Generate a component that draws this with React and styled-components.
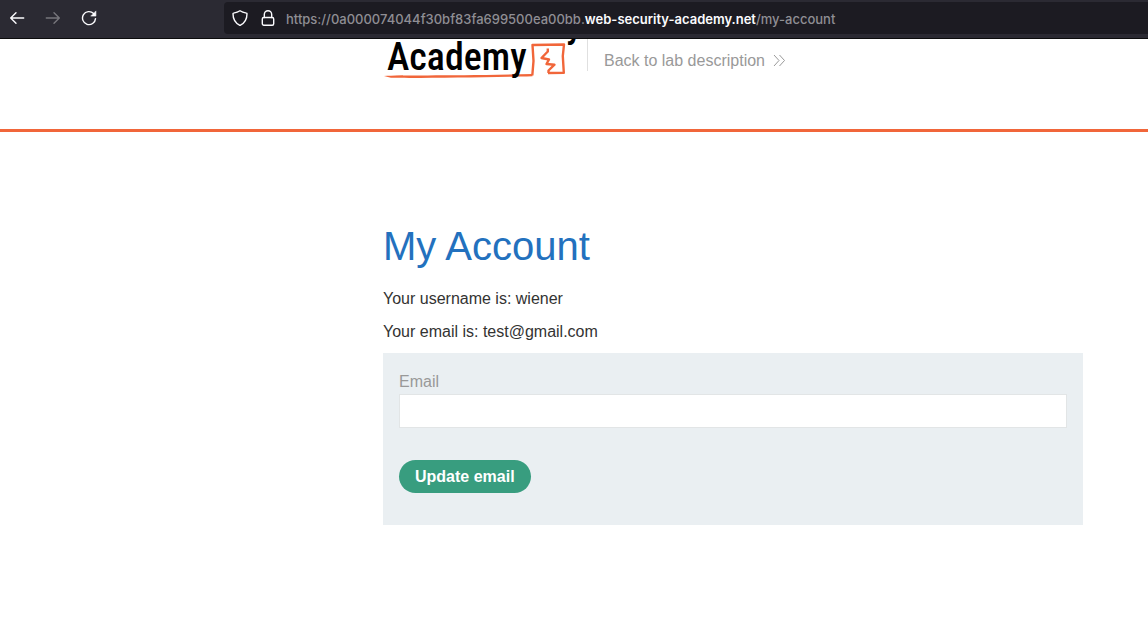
import React from "react";
import styled, { createGlobalStyle } from "styled-components";

const GlobalStyle = createGlobalStyle`
  * { box-sizing: border-box; }
  body {
    margin: 0;
    background: #fff;
    color: #333332;
    font-family: "Liberation Sans", Arial, sans-serif;
    font-size: 16px;
  }
`;

const Toolbar = styled.div`
  position: relative;
  z-index: 1;
  display: flex;
  height: 39px;
  background: #2b2a33;
  border-bottom: 1px solid #0c0c0d;
  padding-top: 2px;
`;

const NavButtons = styled.nav`
  display: flex;
  flex: 0 0 224px;
  height: 32px;
  padding-left: 1px;
  gap: 4px;
`;

const NavButton = styled.button`
  display: flex;
  align-items: center;
  justify-content: center;
  width: 32px;
  height: 32px;
  padding: 0;
  border: 0;
  background: none;
  color: ${(p) => (p.disabled ? "#77767c" : "#fbfbfe")};
`;

const AddressBar = styled.div`
  display: flex;
  flex: 1;
  align-items: center;
  height: 32px;
  padding-left: 8px;
  border-radius: 4px 0 0 4px;
  background: #1c1b22;
  color: #fbfbfe;
  gap: 12px;
`;

const Url = styled.span`
  padding-top: 2px;
  margin-left: -2px;
  color: #8f8e94;
  font-family: Inter, sans-serif;
  font-size: 13px;
  font-weight: 500;
  line-height: 20px;
  white-space: nowrap;
`;

const Domain = styled.span`
  color: #fbfbfe;
  font-weight: 600;
`;

const Header = styled.header`
  display: flex;
  height: 93px;
  padding-left: 383px;
  border-bottom: 3px solid #f1663a;
`;

const Logo = styled.svg`
  display: block;
  flex: none;
  overflow: visible;
`;

const LogoText = styled.text`
  font-family: "Roboto Condensed", Roboto, sans-serif;
  font-weight: 500;
  font-size: 38px;
`;

const LabLinkArea = styled.div`
  height: 32px;
  padding: 12px 0 0 16px;
  border-left: 1px solid #e0e0e0;
`;

const LabLink = styled.a`
  display: flex;
  align-items: center;
  gap: 8px;
  color: #999;
  line-height: 20px;
  text-decoration: none;
`;

const Main = styled.main`
  padding: 90px 65px 0 383px;
`;

const Title = styled.h1`
  margin: 0;
  color: #2371be;
  font-size: 40px;
  font-weight: 400;
  line-height: 48px;
`;

const Info = styled.p`
  margin: 0 0 13px;
  line-height: 20px;
`;

const Details = styled.section`
  padding: 19px 0 11px;

  ${Info}:last-child {
    margin-bottom: 0;
  }
`;

const Form = styled.form`
  display: flex;
  flex-direction: column;
  align-items: flex-start;
  padding: 19px 16px 32px;
  background: #eaeff2;
`;

const Label = styled.label`
  color: #999;
  line-height: 20px;
`;

const Field = styled.input`
  width: 100%;
  height: 34px;
  margin: 2px 0 32px;
  padding: 0 8px;
  border: 1px solid #e2e5e6;
  background: #fff;
  font: inherit;
`;

const Submit = styled.button`
  height: 33px;
  padding: 0 16px;
  border: 0;
  border-radius: 17px;
  background: #389d7f;
  color: #fff;
  font-family: inherit;
  font-size: 16px;
  font-weight: 700;
`;

function Icon({ children, size = 16, width = 1.4 }) {
  return (
    <svg width={size} height={size} viewBox="0 0 16 16" fill="none" stroke="currentColor"
      strokeWidth={width} strokeLinecap="round" strokeLinejoin="round" aria-hidden="true">
      {children}
    </svg>
  );
}

export default function App() {
  return (
    <>
      <GlobalStyle />
      <Toolbar>
        <NavButtons aria-label="Browser">
          <NavButton aria-label="Back">
            <Icon><path d="M14.7 8H2M7 2.7 1.7 8 7 13.3" /></Icon>
          </NavButton>
          <NavButton aria-label="Forward" disabled>
            <Icon><path d="M1.3 8H14M9 2.7 14.3 8 9 13.3" /></Icon>
          </NavButton>
          <NavButton aria-label="Reload">
            <Icon>
              <path d="M12.6 3.5A6.5 6.5 0 1 0 14.5 8.6" />
              <path d="M14.9 1.3v4.8h-4.8z" fill="currentColor" strokeWidth="0.6" />
            </Icon>
          </NavButton>
        </NavButtons>
        <AddressBar>
          <Icon><path d="M8 .8C6.3 2 4 2.7 1.5 3.1c-.3 0-.5.3-.5.7 0 5.2 2.4 9.2 6.5 11.4.3.2.7.2 1 0C12.6 13 15 9 15 3.8c0-.4-.2-.7-.5-.7C12 2.7 9.7 2 8 .8z" /></Icon>
          <Icon><rect x="2.3" y="7.5" width="11.4" height="7.8" rx="1.5" /><path d="M4.3 7.5V4.4a3.7 3.7 0 0 1 7.4 0v3.1" /></Icon>
          <Url>https://0a000074044f30bf83fa699500ea00bb.<Domain>web-security-academy.net</Domain>/my-account</Url>
        </AddressBar>
      </Toolbar>
      <Header>
        <Logo width="204" height="44" viewBox="0 0 204 44" role="img" aria-label="Academy">
          <path d="M1 36.9C18 36 70 37 149 35L149.500 37.200C105 38.300 40 39.200 8 38.800Z" fill="#f1663a" />
          <g fill="none" stroke="#f1663a" strokeLinejoin="round">
            <path d="M149.300 36.500 150.500 22 149.500 6 181 5.500 179.800 17 180.800 33.700 165 34" strokeWidth="2.400" />
            <path d="M164.800 9.500V12.500L158.500 19 166 20.500 163.500 25 171.500 25.700 165.500 31.500V34" strokeWidth="2.400" />
          </g>
          <LogoText x="4" y="31">Academy</LogoText>
          <LogoText x="183" y="-2">y</LogoText>
        </Logo>
        <LabLinkArea>
          <LabLink href="#lab">
            Back to lab description
            <svg width="12" height="12" viewBox="0 0 12 12" fill="none" stroke="#999" aria-hidden="true">
              <path d="M1 0 6 5.500 1 11M6.500 0 11.500 5.500 6.500 11" />
            </svg>
          </LabLink>
        </LabLinkArea>
      </Header>
      <Main>
        <Title>My Account</Title>
        <Details>
          <Info>Your username is: wiener</Info>
          <Info>Your email is: test@gmail.com</Info>
        </Details>
        <Form onSubmit={(e) => e.preventDefault()}>
          <Label htmlFor="email">Email</Label>
          <Field id="email" type="email" name="email" />
          <Submit type="submit">Update email</Submit>
        </Form>
      </Main>
    </>
  );
}
